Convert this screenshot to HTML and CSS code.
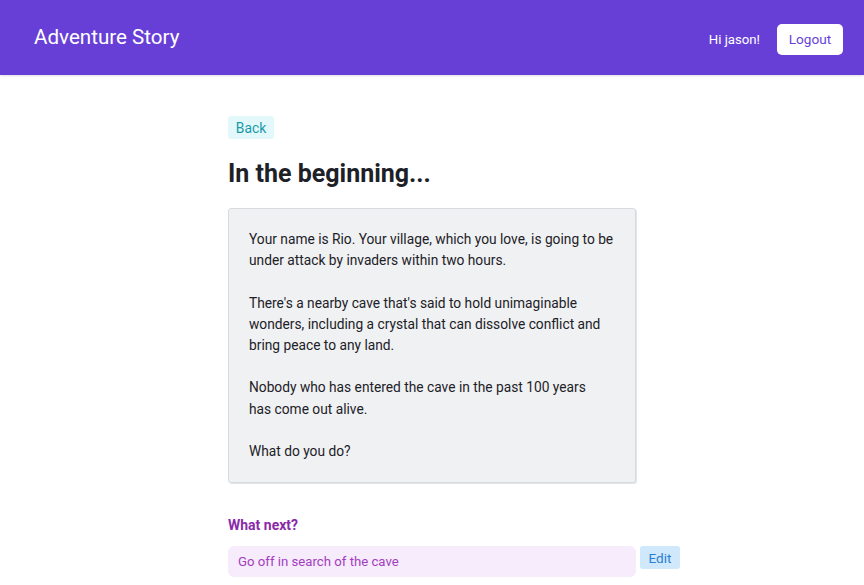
FILE: index.html
```html
<!DOCTYPE html>
<html>
<head>
<meta charset="utf-8">
<link rel="stylesheet" href="styles.css">
</head>
<body>
<header class="topbar">
  <div class="brand">Adventure Story</div>
  <div class="user">
    <span class="greet">Hi jason!</span>
    <button class="logout">Logout</button>
  </div>
</header>
<main class="content">
  <button class="back">Back</button>
  <h1 class="title">In the beginning...</h1>
  <div class="story">
    <p>Your name is Rio. Your village, which you love, is going to be under attack by invaders within two hours.</p>
    <p>There's a nearby cave that's said to hold unimaginable wonders, including a crystal that can dissolve conflict and bring peace to any land.</p>
    <p>Nobody who has entered the cave in the past 100 years<br>has come out alive.</p>
    <p>What do you do?</p>
  </div>
  <h2 class="next">What next?</h2>
  <div class="choice-row">
    <div class="choice">Go off in search of the cave</div>
    <button class="edit">Edit</button>
  </div>
</main>
</body>
</html>
```
FILE: styles.css
```css
* { box-sizing: border-box; }
html, body { margin: 0; padding: 0; }
body {
  font-family: Roboto, "Liberation Sans", sans-serif;
  color: #1d2127;
  background: #fff;
}
.topbar {
  height: 75px;
  background: #673fd7;
  display: flex;
  align-items: center;
  justify-content: space-between;
  padding: 0 21px 0 34px;
  box-shadow: 0 1px 2px rgba(0,0,0,0.12);
}
.brand {
  color: #fff;
  font-size: 20.6px;
  font-weight: 400;
  margin-top: -2px;
}
.user {
  display: flex;
  align-items: center;
  gap: 17px;
  margin-top: 3px;
}
.greet {
  color: #fff;
  font-size: 13.2px;
}
.logout {
  font-family: inherit;
  font-size: 13.6px;
  color: #673fd7;
  background: #fff;
  border: none;
  border-radius: 5px;
  height: 31px;
  width: 66px;
  padding: 0;
}
.content {
  width: 408px;
  margin: 0 0 0 228px;
  padding-top: 41px;
}
.back {
  font-family: inherit;
  font-size: 13.8px;
  color: #1a9aa8;
  background: #e3f8fa;
  border: none;
  border-radius: 3px;
  height: 23px;
  width: 46px;
  padding: 0;
  display: block;
}
.title {
  font-size: 25px;
  font-weight: 700;
  color: #1d2127;
  margin: 20px 0 19px 0;
  line-height: 30px;
}
.story {
  background: #f0f1f3;
  border: 1px solid #d7dadf;
  border-radius: 3px;
  padding: 20px;
  box-shadow: 1px 1px 0 #e2e5ea;
}
.story p {
  margin: 0 0 21.2px 0;
  font-size: 13.75px;
  line-height: 21.2px;
  color: #1d2127;
}
.story p:last-child { margin-bottom: 0; }
.next {
  font-size: 14px;
  font-weight: 700;
  color: #8a2aa8;
  margin: 33px 0 12px 0;
  line-height: 18px;
}
.choice-row {
  display: flex;
  align-items: flex-start;
  gap: 4px;
  width: 452px;
}
.choice {
  width: 408px;
  flex: none;
  height: 31px;
  line-height: 31px;
  background: #f6ecfb;
  color: #a33cbf;
  font-size: 13.2px;
  padding-left: 10px;
  border-radius: 6px;
}
.edit {
  font-family: inherit;
  font-size: 13.6px;
  color: #2b7fd0;
  background: #cfe8fb;
  border: none;
  border-radius: 3px;
  height: 23px;
  width: 40px;
  padding: 0;
}
```
